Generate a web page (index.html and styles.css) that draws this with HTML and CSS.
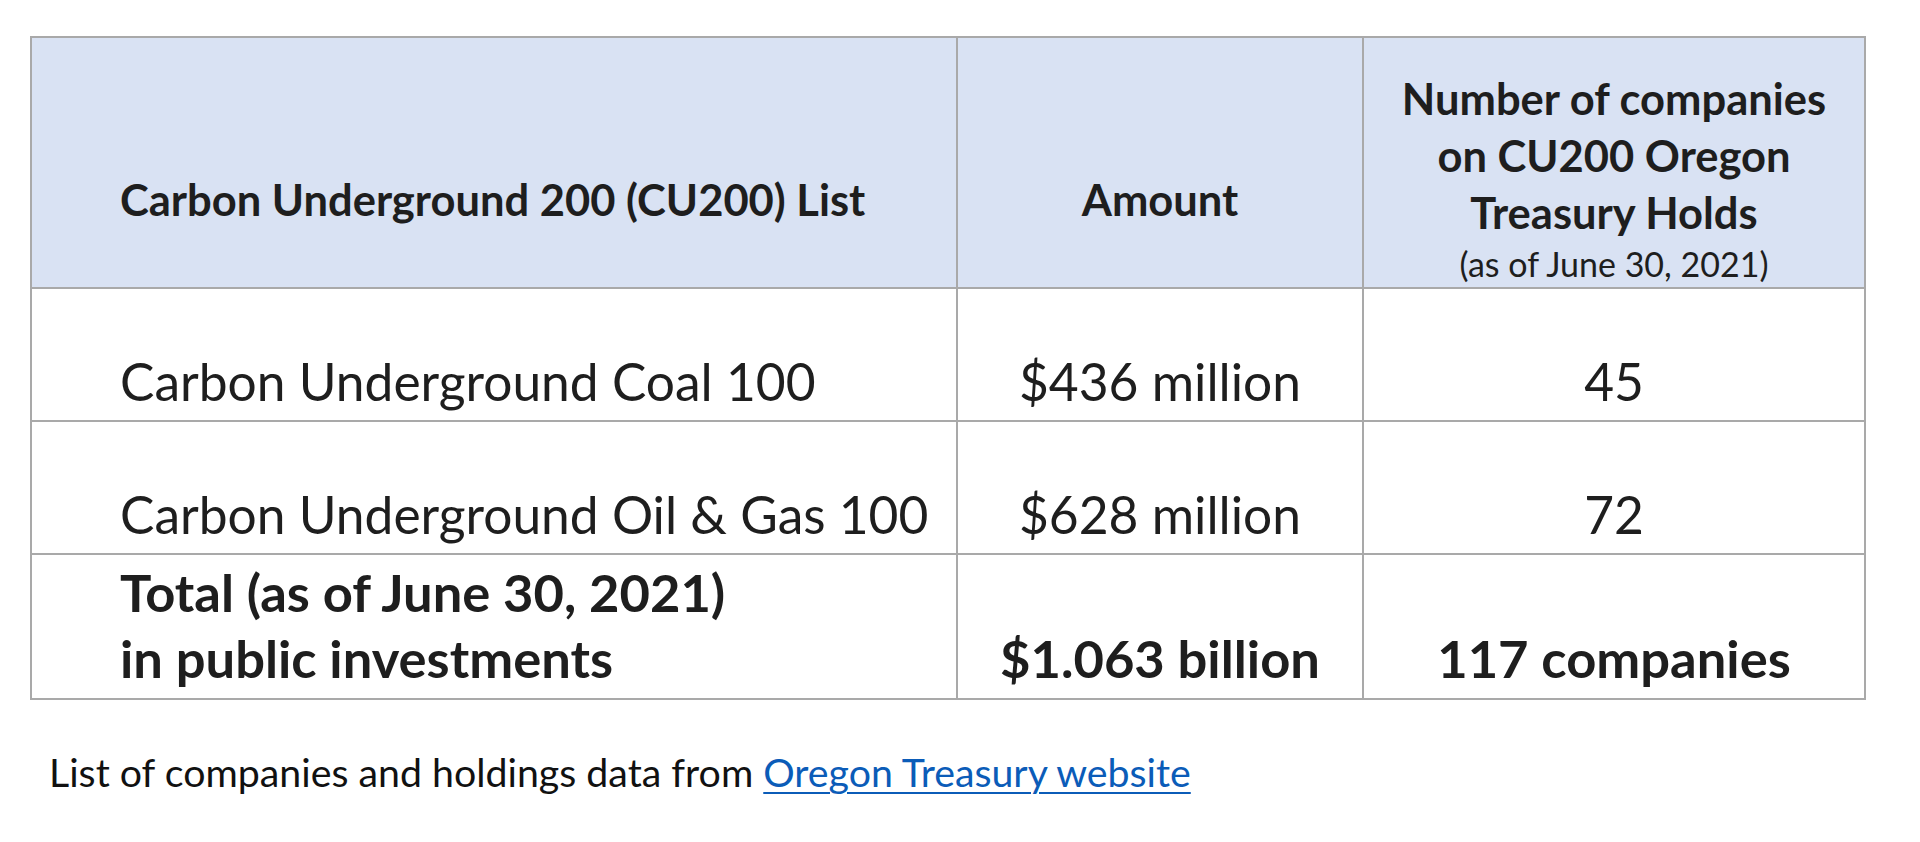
FILE: index.html
```html
<!DOCTYPE html>
<html lang="en">
<head>
<meta charset="utf-8">
<title>Carbon Underground 200 holdings</title>
<link rel="stylesheet" href="styles.css">
</head>
<body>
<main class="page">
  <table class="holdings">
    <colgroup>
      <col class="col-list">
      <col class="col-amount">
      <col class="col-count">
    </colgroup>
    <thead>
      <tr class="row-head">
        <th class="cell-list">Carbon Underground 200 (CU200) List</th>
        <th class="cell-center">Amount</th>
        <th class="cell-center cell-count-head">
          <span class="head-line">Number of companies</span>
          <span class="head-line">on CU200 Oregon</span>
          <span class="head-line">Treasury Holds</span>
          <span class="head-note">(as of June 30, 2021)</span>
        </th>
      </tr>
    </thead>
    <tbody>
      <tr class="row-item">
        <td class="cell-list">Carbon Underground Coal 100</td>
        <td class="cell-center">$436 million</td>
        <td class="cell-center">45</td>
      </tr>
      <tr class="row-item">
        <td class="cell-list">Carbon Underground Oil &amp; Gas 100</td>
        <td class="cell-center">$628 million</td>
        <td class="cell-center">72</td>
      </tr>
      <tr class="row-total">
        <td class="cell-list">Total (as of June 30, 2021)<br>in public investments</td>
        <td class="cell-center">$1.063 billion</td>
        <td class="cell-center">117 companies</td>
      </tr>
    </tbody>
  </table>
  <p class="source">List of companies and holdings data from <a href="#" class="source-link">Oregon Treasury website</a></p>
</main>
</body>
</html>
```

FILE: styles.css
```css
html, body {
  margin: 0;
  padding: 0;
  background: #ffffff;
}

body {
  font-family: Lato, "Open Sans", "Liberation Sans", sans-serif;
  color: #1e1e1e;
}

.page {
  padding: 36px 0 0 30px;
}

.holdings {
  border-collapse: collapse;
  table-layout: fixed;
  width: 1834px;
}

.col-list { width: 926px; }
.col-amount { width: 406px; }
.col-count { width: 502px; }

.holdings th,
.holdings td {
  border: 2px solid #a9a9a9;
  vertical-align: bottom;
  padding: 0;
}

.holdings th {
  background: #d9e2f3;
  font-weight: 700;
  font-size: 43.5px;
  line-height: 57px;
  padding-bottom: 59px;
}

.holdings th.cell-count-head {
  padding-bottom: 0;
}

.row-head { height: 251px; }
.row-item { height: 133px; }
.row-total { height: 145px; }

.cell-list {
  text-align: left;
  padding-left: 88px !important;
}

.cell-center {
  text-align: center;
}

.head-line {
  display: block;
}

.head-note {
  display: block;
  font-weight: 400;
  font-size: 34px;
  line-height: 46px;
}

.row-item td {
  font-size: 51.5px;
  line-height: 64px;
  padding-bottom: 7px;
}

.row-total td {
  font-size: 52.5px;
  font-weight: 700;
  line-height: 66px;
  padding-bottom: 7px;
}

.source {
  margin: 47px 0 0 19px;
  font-size: 39.3px;
  line-height: 50px;
  color: #111111;
}

.source-link {
  color: #0b5cb8;
  text-decoration: underline;
  text-decoration-thickness: 2px;
  text-underline-offset: 5px;
}
```
